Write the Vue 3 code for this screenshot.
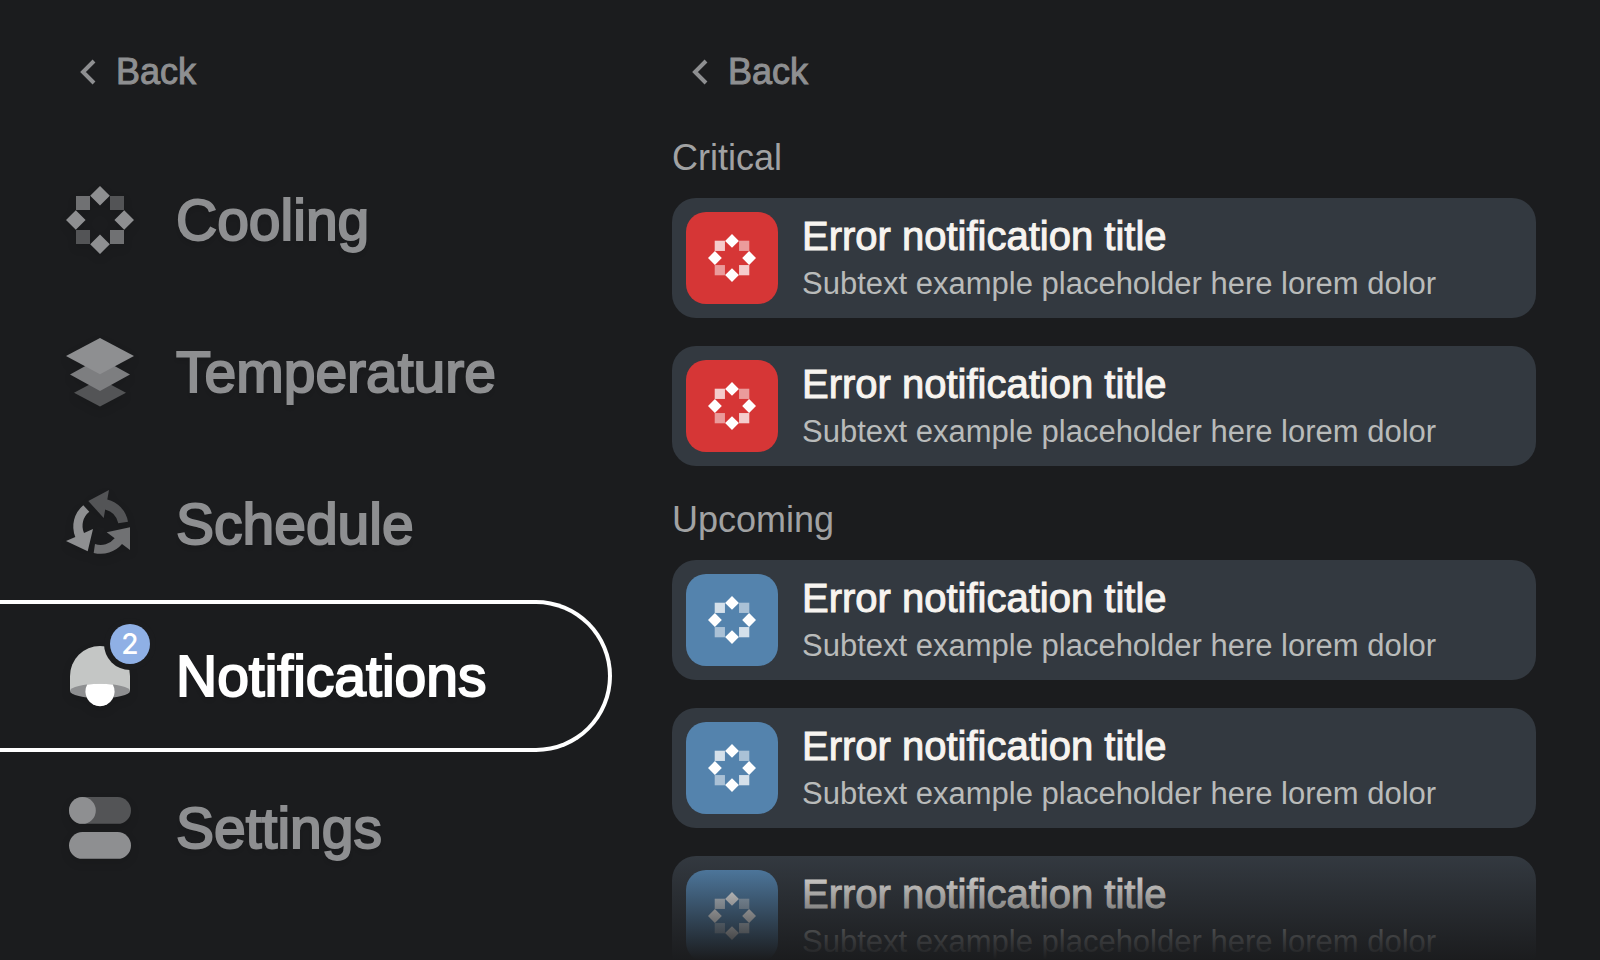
<template>
  <div class="screen">
    <aside class="sidebar">
      <button type="button" class="back-btn">
        <svg class="back-icon" viewBox="0 0 16 26" aria-hidden="true">
          <path d="M14 2 L3 13 L14 24" />
        </svg>
        Back
      </button>

      <nav class="menu">
        <a
          v-for="item in menuItems"
          :key="item.id"
          href="#"
          class="menu-item"
          :class="{ active: item.id === activeItem }"
          @click.prevent="activeItem = item.id"
        >
          <span class="menu-icon">
            <svg v-if="item.id === 'cooling'" viewBox="0 0 68 68" aria-hidden="true">
              <g class="tone-mid">
                <rect x="10" y="10" width="14" height="14" />
                <rect x="44" y="44" width="14" height="14" />
              </g>
              <g class="tone-dark">
                <rect x="44" y="10" width="14" height="14" />
                <rect x="10" y="44" width="14" height="14" />
              </g>
              <path class="tone-light" :d="diamonds" />
            </svg>

            <svg v-else-if="item.id === 'temperature'" viewBox="0 0 68 68" aria-hidden="true">
              <path class="tone-dark" d="M34 41 L60 54.7 L34 68.6 L8 54.7 Z" />
              <path class="tone-soft" d="M34 20 L64 36.4 L34 53 L4 36.4 Z" />
              <path class="tone-light" d="M34 0 L68 18 L34 36.3 L0 18 Z" />
            </svg>

            <svg v-else-if="item.id === 'schedule'" viewBox="0 0 68 68" aria-hidden="true">
              <path class="tone-dark" d="M22.3 11 L43 0 L41.3 9.4 A27.7 27.7 0 0 1 62 31.7 L52.3 33.3 A18 18 0 0 0 39.2 19.4 L37.7 28 Z" />
              <path class="tone-light" d="M17.3 15.3 A27.7 27.7 0 0 0 9.3 47 L0 51 L21.7 61.3 L27 39 L18 43 A18 18 0 0 1 23.3 21.7 Z" />
              <path class="tone-mid" d="M27.7 62.9 A27.7 27.7 0 0 0 56 54 L64 60 V37.3 L40.7 42.3 L48.7 48.3 A18 18 0 0 1 29 54 Z" />
            </svg>

            <svg v-else-if="item.id === 'notifications'" viewBox="0 0 68 68" aria-hidden="true">
              <path class="bell-dome" d="M4 49 V34 A30 30 0 0 1 64 34 V49 Z" />
              <ellipse class="tone-light" cx="34" cy="49" rx="30" ry="7.2" />
              <path class="bell-clapper" d="M21.2 42.6 Q34 41 46.8 42.6 A14.6 14.6 0 1 1 21.2 42.6 Z" />
            </svg>

            <svg v-else viewBox="0 0 68 68" aria-hidden="true">
              <rect class="tone-dark" x="3" y="3" width="62" height="26.8" rx="13.4" />
              <circle class="tone-light" cx="16.4" cy="16.4" r="13.4" />
              <rect class="tone-light" x="3" y="38" width="62" height="26.8" rx="13.4" />
            </svg>

            <span v-if="item.badge" class="badge">{{ item.badge }}</span>
          </span>
          <span class="menu-label">{{ item.label }}</span>
        </a>
      </nav>
    </aside>

    <main class="content">
      <button type="button" class="back-btn">
        <svg class="back-icon" viewBox="0 0 16 26" aria-hidden="true">
          <path d="M14 2 L3 13 L14 24" />
        </svg>
        Back
      </button>

      <div class="sections">
        <section v-for="section in sections" :key="section.title">
          <h2 class="section-title">{{ section.title }}</h2>
          <ul class="card-list">
            <li v-for="note in section.notes" :key="note.id" class="card">
              <span class="card-icon" :class="section.level">
                <svg viewBox="0 0 68 68" aria-hidden="true">
                  <g opacity="0.75">
                    <rect x="9.5" y="9.5" width="14.5" height="14.5" />
                    <rect x="44" y="44" width="14.5" height="14.5" />
                  </g>
                  <g opacity="0.5">
                    <rect x="44" y="9.5" width="14.5" height="14.5" />
                    <rect x="9.5" y="44" width="14.5" height="14.5" />
                  </g>
                  <path :d="diamonds" />
                </svg>
              </span>
              <div class="card-text">
                <h3>{{ note.title }}</h3>
                <p>{{ note.text }}</p>
              </div>
            </li>
          </ul>
        </section>
      </div>

      <div class="fade"></div>
    </main>
  </div>
</template>

<script setup>
import { ref } from 'vue';

const activeItem = ref('notifications');

const menuItems = [
  { id: 'cooling', label: 'Cooling' },
  { id: 'temperature', label: 'Temperature' },
  { id: 'schedule', label: 'Schedule' },
  { id: 'notifications', label: 'Notifications', badge: 2 },
  { id: 'settings', label: 'Settings' },
];

const makeNote = (id) => ({
  id,
  title: 'Error notification title',
  text: 'Subtext example placeholder here lorem dolor',
});

const sections = [
  { title: 'Critical', level: 'critical', notes: [1, 2].map(makeNote) },
  { title: 'Upcoming', level: 'upcoming', notes: [3, 4, 5].map(makeNote) },
];

// four diamonds of the cooling icon: top, right, bottom, left
const diamonds = [[34, 9.8], [58.2, 34], [34, 58.2], [9.8, 34]]
  .map(([x, y]) => `M${x} ${y - 9.8} l9.8 9.8 l-9.8 9.8 l-9.8 -9.8 Z`)
  .join(' ');
</script>

<style>
body {
  margin: 0;
  background: #1b1c1e;
}
</style>

<style scoped>
.screen {
  display: flex;
  height: 100vh;
  overflow: hidden;
  background: #1b1c1e;
  color: #8e8f91;
  font-family: 'Liberation Sans', Arial, sans-serif;
}

.sidebar {
  flex: 0 0 612px;
  padding-top: 48px;
}

.content {
  position: relative;
  flex: 1;
  min-width: 0;
  padding: 48px 64px 0 60px;
  overflow: hidden;
}

/* Back button */
.back-btn {
  display: flex;
  align-items: center;
  gap: 20px;
  margin: 0;
  padding: 0 0 0 20px;
  border: none;
  background: none;
  color: inherit;
  font-family: inherit;
  font-size: 36px;
  line-height: 48px;
  -webkit-text-stroke: 1px currentColor;
  cursor: pointer;
}

.sidebar .back-btn {
  padding-left: 80px;
}

.back-icon {
  width: 16px;
  height: 26px;
  fill: none;
  stroke: currentColor;
  stroke-width: 4;
}

/* Menu */
.menu {
  margin-top: 48px;
}

.menu-item {
  display: flex;
  align-items: center;
  gap: 42px;
  box-sizing: border-box;
  height: 152px;
  padding-left: 66px;
  border: 4px solid transparent;
  border-left: none;
  border-radius: 0 76px 76px 0;
  color: inherit;
  font-size: 57px;
  line-height: 68px;
  text-decoration: none;
}

.menu-item.active {
  border-color: #fff;
  color: #fff;
}

.menu-icon {
  position: relative;
  width: 68px;
  height: 68px;
}

.menu-icon svg {
  display: block;
  width: 100%;
  height: 100%;
  overflow: visible;
  filter: drop-shadow(0 4px 4px rgba(0, 0, 0, 0.1));
}

.menu-label {
  -webkit-text-stroke: 2px currentColor;
  text-shadow: 0 4px 4px rgba(0, 0, 0, 0.1);
}

.tone-light {
  fill: #8e8f91;
}

.tone-soft {
  fill: #7d7e80;
}

.tone-mid {
  fill: #707173;
}

.tone-dark {
  fill: #535456;
}

.bell-dome {
  fill: #c4c6c5;
}

.bell-clapper {
  fill: #fff;
}

.badge {
  position: absolute;
  top: -18px;
  right: -16px;
  width: 40px;
  height: 40px;
  border-radius: 50%;
  background: #8fb0e5;
  box-shadow: 0 0 0 6px #1b1c1e;
  color: #fff;
  font-family: Inter, sans-serif;
  font-size: 28px;
  font-weight: 500;
  line-height: 40px;
  text-align: center;
}

/* Notifications */
.sections {
  display: flex;
  flex-direction: column;
  gap: 30px;
  margin-top: 38px;
}

.section-title {
  margin: 0 0 16px;
  color: #a1a2a3;
  font-size: 36px;
  font-weight: 400;
  line-height: 48px;
}

.card-list {
  display: flex;
  flex-direction: column;
  gap: 28px;
  margin: 0;
  padding: 0;
  list-style: none;
}

.card {
  display: flex;
  align-items: center;
  gap: 24px;
  min-height: 120px;
  padding: 0 14px;
  border-radius: 24px;
  background: #333940;
}

.card-icon {
  display: flex;
  flex: none;
  align-items: center;
  justify-content: center;
  width: 92px;
  height: 92px;
  border-radius: 20px;
}

.card-icon svg {
  width: 48px;
  height: 48px;
  fill: #fff;
}

.card-icon.critical {
  background: #d63636;
}

.card-icon.upcoming {
  background: #5483ad;
}

.card-text {
  min-width: 0;
  padding-top: 4px;
  white-space: nowrap;
}

.card-text h3,
.card-text p {
  margin: 0;
  line-height: 48px;
}

.card-text h3 {
  color: #f7f4f0;
  font-size: 40px;
  font-weight: 400;
  -webkit-text-stroke: 1px currentColor;
}

.card-text p {
  color: #b9bbba;
  font-size: 31px;
}

/* Fades out the list at the bottom edge */
.fade {
  position: absolute;
  right: 0;
  bottom: 0;
  left: 0;
  height: 104px;
  background: linear-gradient(to bottom, rgba(27, 28, 30, 0), #1b1c1e);
  pointer-events: none;
}
</style>
